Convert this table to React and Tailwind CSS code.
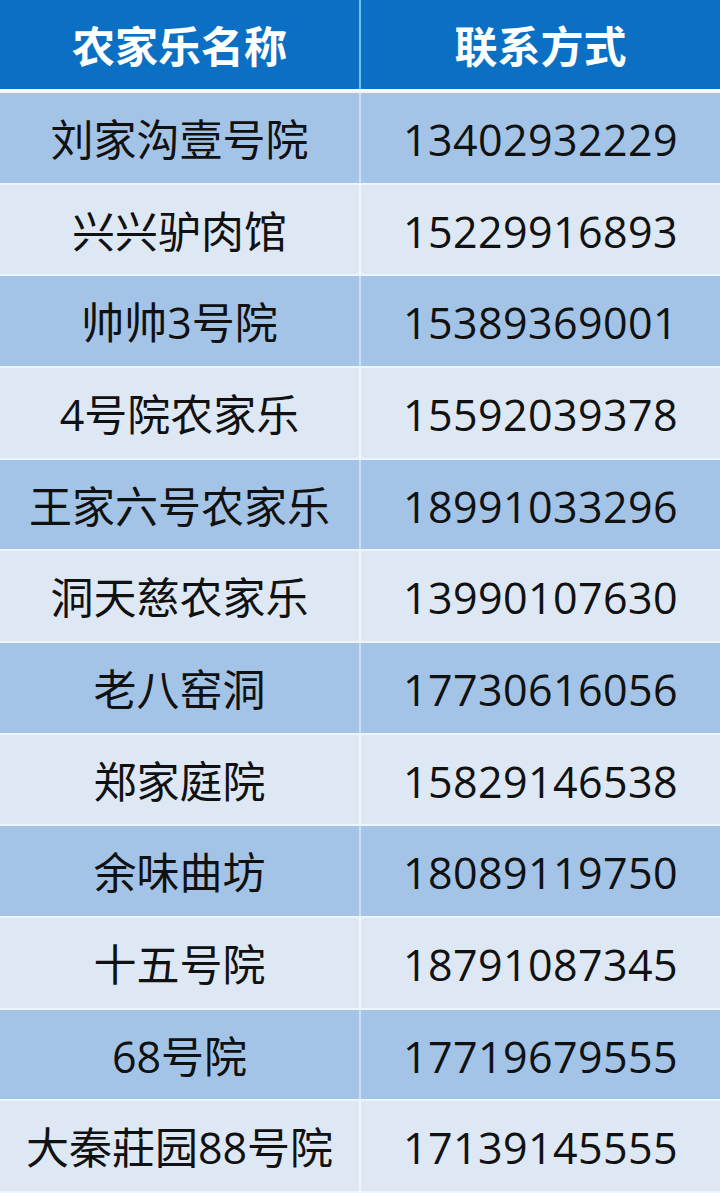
const rows = [
  ["刘家沟壹号院", "13402932229"],
  ["兴兴驴肉馆", "15229916893"],
  ["帅帅3号院", "15389369001"],
  ["4号院农家乐", "15592039378"],
  ["王家六号农家乐", "18991033296"],
  ["洞天慈农家乐", "13990107630"],
  ["老八窑洞", "17730616056"],
  ["郑家庭院", "15829146538"],
  ["余味曲坊", "18089119750"],
  ["十五号院", "18791087345"],
  ["68号院", "17719679555"],
  ["大秦莊园88号院", "17139145555"],
];

const font = { fontFamily: '"Open Sans", "Noto Sans CJK SC", sans-serif' };

export default function App() {
  return (
    <div
      className="w-[720px] h-[1193px] bg-[#eef5fb] flex flex-col gap-[2px] pb-[2px]"
      style={font}
    >
      {/* header */}
      <div className="h-[89px] shrink-0 flex gap-[2px] bg-[#74bdf2]">
        <div className="w-[359px] bg-[#0b70c4] flex items-center justify-center text-white font-bold text-[43px] leading-none pt-[4px]">
          农家乐名称
        </div>
        <div className="flex-1 bg-[#0b70c4] flex items-center justify-center text-white font-bold text-[43px] leading-none pt-[4px]">
          联系方式
        </div>
      </div>

      <div className="h-[2px] -mt-[2px] bg-white shrink-0" />

      {rows.map(([name, phone], i) => (
        <div
          key={phone}
          className={`flex-1 flex gap-[2px] ${
            i % 2 === 0 ? "bg-[#c9def2]" : "bg-[#f2f7fc]"
          }`}
        >
          <div
            className={`w-[359px] flex items-center justify-center text-[43px] leading-none text-[#111] pt-[3px] ${
              i % 2 === 0 ? "bg-[#a3c4e7]" : "bg-[#dde8f4]"
            }`}
          >
            {name}
          </div>
          <div
            className={`flex-1 flex items-center justify-center text-[43px] leading-none tracking-[0.4px] text-[#111] pt-[3px] ${
              i % 2 === 0 ? "bg-[#a3c4e7]" : "bg-[#dde8f4]"
            }`}
          >
            {phone}
          </div>
        </div>
      ))}
    </div>
  );
}
